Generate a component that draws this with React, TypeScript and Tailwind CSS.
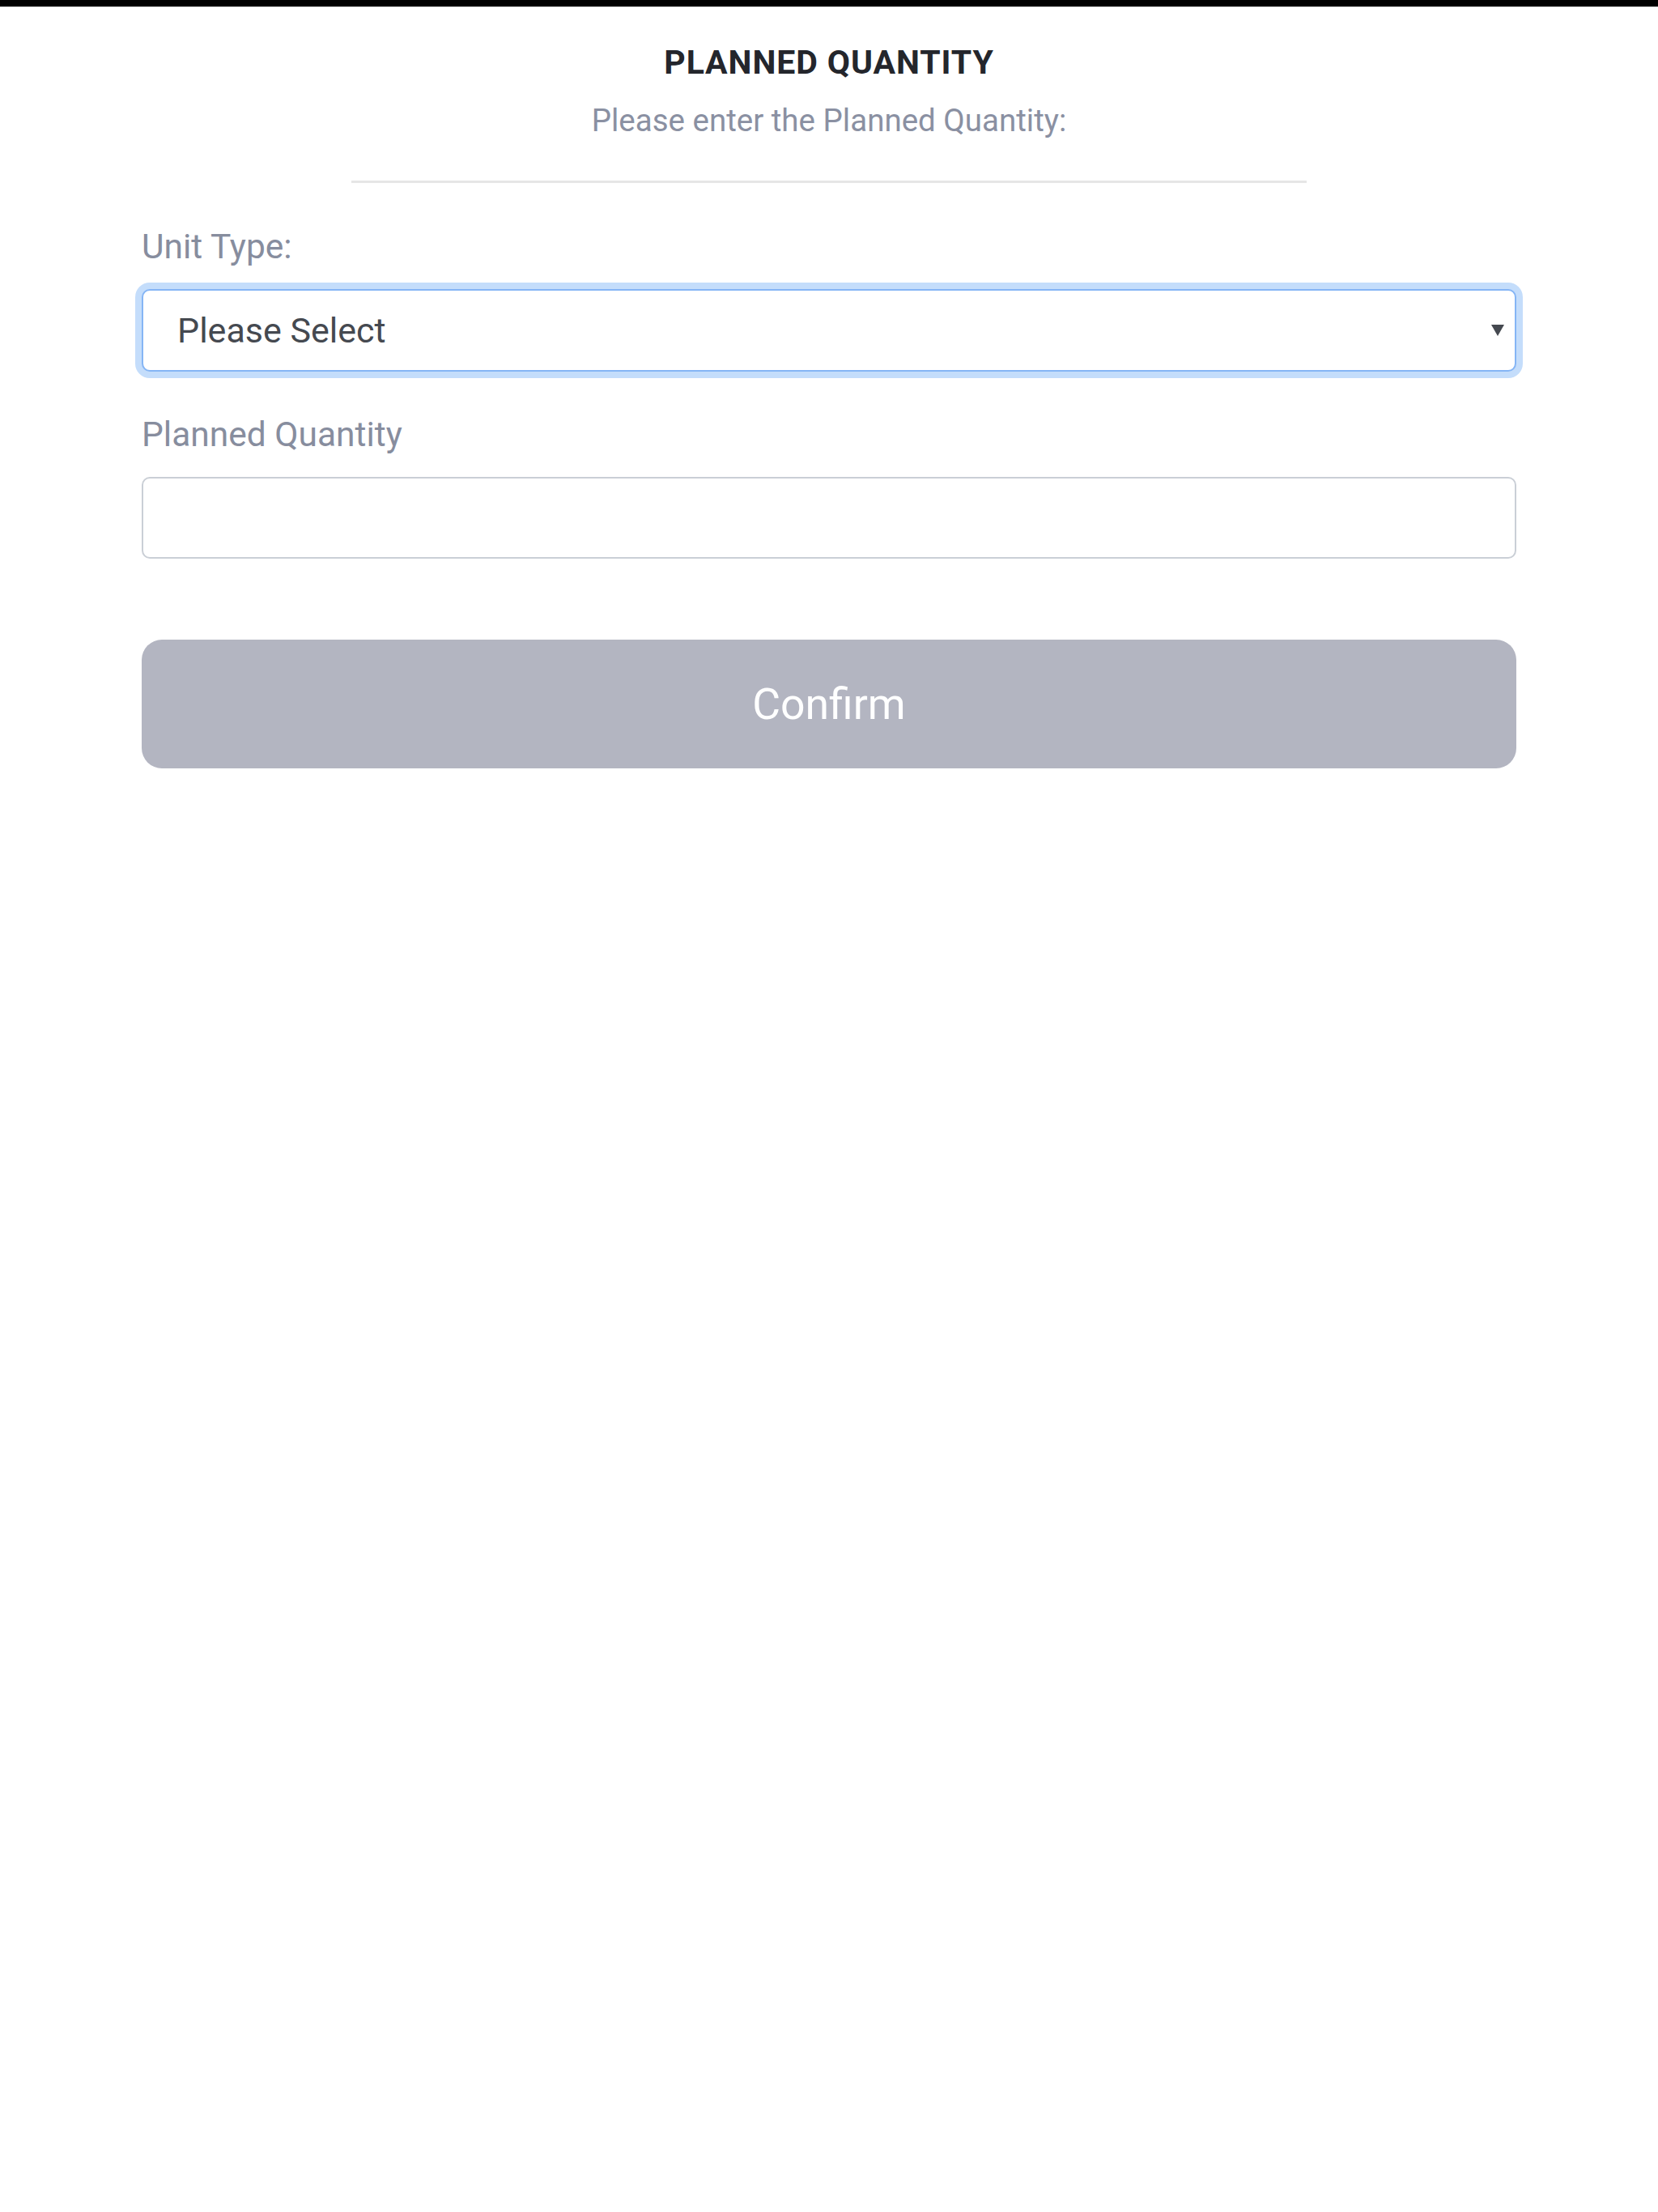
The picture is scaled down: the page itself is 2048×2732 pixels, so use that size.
import React from "react";

export default function App() {
  return (
    <div className="min-h-[2732px] w-[2048px] bg-white" style={{ fontFamily: "Roboto, 'Noto Sans', sans-serif" }}>
      <div className="h-[8px] bg-black" />
      <div className="h-[1px] bg-[#cfcfcf]" />
      <div className="flex flex-col items-center pt-[46px]">
        <div className="text-[41px] leading-[44px] font-bold tracking-[0.9px] text-[#24262c]">PLANNED QUANTITY</div>
        <div className="mt-[28px] text-[38.5px] leading-[44px] text-[#8a90a2]">Please enter the Planned Quantity:</div>
        <div className="mt-[52px] h-[3px] w-[1180px] bg-[#e6e6e6]" />
      </div>
      <div className="px-[175px] pt-[55px]">
        <div className="text-[42.5px] leading-[48px] text-[#878d9e]">Unit Type:</div>
        <div className="mt-[28px] flex h-[102px] items-center justify-between rounded-[10px] border-2 border-[#85b5f5] bg-white pl-[42px] pr-[12px] ring-8 ring-[#c4ddfb]">
          <span className="text-[43px] leading-[48px] text-[#454950]">Please Select</span>
          <svg width="18" height="16" viewBox="0 0 18 16" className="block">
            <polygon points="1,1 17,1 9,15" fill="#454950" />
          </svg>
        </div>
        <div className="mt-[54px] text-[42.5px] leading-[48px] text-[#878d9e]">Planned Quantity</div>
        <div className="mt-[28px] h-[101px] rounded-[10px] border-[2.5px] border-[#cacfd6] bg-white" />
        <button className="mt-[100px] flex h-[159px] w-full items-center justify-center rounded-[25px] bg-[#b3b5c1] text-[53.5px] leading-[60px] text-white">
          Confirm
        </button>
      </div>
    </div>
  );
}
